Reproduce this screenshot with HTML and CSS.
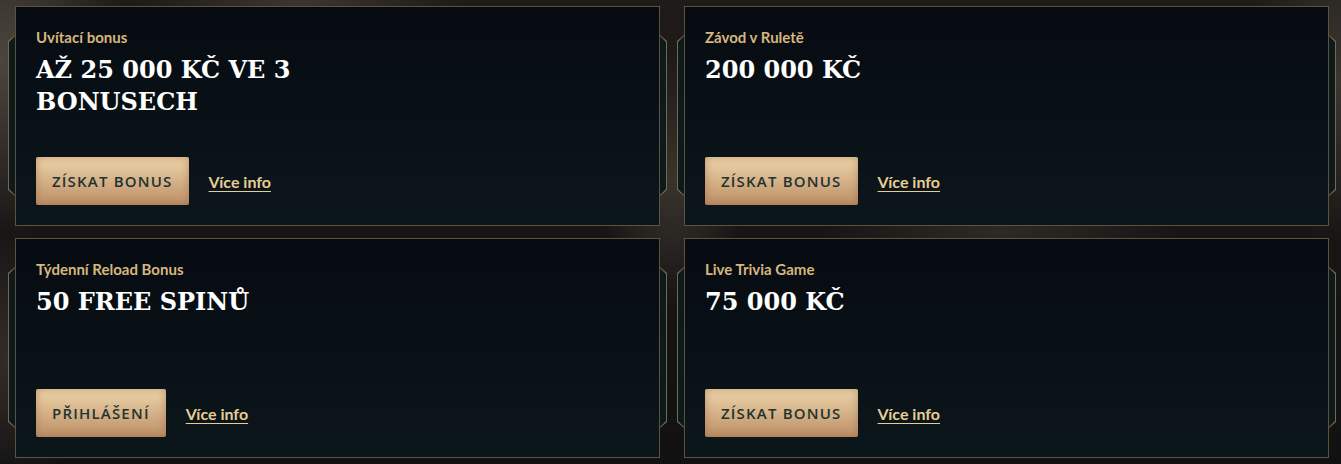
FILE: index.html
```html
<!DOCTYPE html>
<html lang="cs">

<head>
    <meta charset="UTF-8">
    <meta name="viewport" content="width=device-width, initial-scale=1.0">
    <title>Bonusy</title>
    <link rel="stylesheet" href="styles.css">
</head>

<body>
    <div class="promo-grid">
        <!-- Uvitaci bonus -->
        <div class="promo-card">
            <span class="tab tab-left"></span>
            <span class="tab tab-right"></span>
            <div class="promo-label">Uvítací bonus</div>
            <div class="promo-title">AŽ 25 000 KČ VE 3<br>BONUSECH</div>
            <div class="promo-actions">
                <a class="btn-gold" href="#">ZÍSKAT BONUS</a>
                <a class="more-link" href="#">Více info</a>
            </div>
        </div>

        <!-- Zavod v Rulete -->
        <div class="promo-card">
            <span class="tab tab-left"></span>
            <span class="tab tab-right"></span>
            <div class="promo-label">Závod v Ruletě</div>
            <div class="promo-title">200 000 KČ</div>
            <div class="promo-actions">
                <a class="btn-gold" href="#">ZÍSKAT BONUS</a>
                <a class="more-link" href="#">Více info</a>
            </div>
        </div>

        <!-- Reload bonus -->
        <div class="promo-card">
            <span class="tab tab-left"></span>
            <span class="tab tab-right"></span>
            <div class="promo-label">Týdenní Reload Bonus</div>
            <div class="promo-title">50 FREE SPINŮ</div>
            <div class="promo-actions">
                <a class="btn-gold" href="#">PŘIHLÁŠENÍ</a>
                <a class="more-link" href="#">Více info</a>
            </div>
        </div>

        <!-- Trivia -->
        <div class="promo-card">
            <span class="tab tab-left"></span>
            <span class="tab tab-right"></span>
            <div class="promo-label">Live Trivia Game</div>
            <div class="promo-title">75 000 KČ</div>
            <div class="promo-actions">
                <a class="btn-gold" href="#">ZÍSKAT BONUS</a>
                <a class="more-link" href="#">Více info</a>
            </div>
        </div>
    </div>
</body>

</html>
```

FILE: styles.css
```css
/* General Styles */
body {
    margin: 0;
    padding: 0;
    height: 464px;
    overflow: hidden;
    font-family: Lato, "Noto Sans", sans-serif;
    background-color: #161413;
    background-image:
        radial-gradient(ellipse 160px 220px at 0px 60px, rgba(90, 84, 76, 0.75), transparent 80%),
        radial-gradient(ellipse 120px 160px at 10px 360px, rgba(70, 62, 55, 0.6), transparent 80%),
        radial-gradient(ellipse 90px 160px at 672px 180px, rgba(70, 64, 58, 0.7), transparent 80%),
        radial-gradient(ellipse 200px 80px at 300px 0px, rgba(80, 72, 62, 0.6), transparent 80%),
        radial-gradient(ellipse 220px 60px at 1000px 232px, rgba(60, 54, 48, 0.6), transparent 80%),
        radial-gradient(ellipse 120px 200px at 1341px 80px, rgba(80, 74, 66, 0.6), transparent 80%),
        linear-gradient(#1e1b18, #111112);
}

.promo-grid {
    display: grid;
    grid-template-columns: 645px 645px;
    grid-auto-rows: 220px;
    column-gap: 24px;
    row-gap: 12px;
    padding: 6px 12px 0 15px;
}

/* Card */
.promo-card {
    position: relative;
    box-sizing: border-box;
    display: flex;
    flex-direction: column;
    padding: 21px 20px 20px 20px;
    border: 1px solid #5d523b;
    background: linear-gradient(#060b11, #0b161b);
}

/* Side tabs */
.tab {
    position: absolute;
    top: 28px;
    bottom: 29px;
    width: 7px;
    background-color: #7a6845;
}

.tab::before {
    content: '';
    position: absolute;
    top: 1px;
    bottom: 1px;
    width: 6px;
    background-color: #0c1a1d;
}

.tab-left {
    left: -8px;
    clip-path: polygon(100% 0, 0 6px, 0 calc(100% - 6px), 100% 100%);
}

.tab-left::before {
    left: 1px;
    clip-path: polygon(100% 0, 0 6px, 0 calc(100% - 6px), 100% 100%);
}

.tab-right {
    right: -8px;
    clip-path: polygon(0 0, 100% 6px, 100% calc(100% - 6px), 0 100%);
}

.tab-right::before {
    right: 1px;
    clip-path: polygon(0 0, 100% 6px, 100% calc(100% - 6px), 0 100%);
}

.promo-label {
    color: #d7b67f;
    font-size: 15px;
    font-weight: 700;
    line-height: 18px;
}

.promo-title {
    margin-top: 8px;
    color: #ffffff;
    font-family: "DejaVu Serif", serif;
    font-size: 24px;
    font-weight: bold;
    line-height: 32px;
}

.promo-actions {
    margin-top: auto;
    display: flex;
    align-items: center;
    gap: 20px;
}

.btn-gold {
    display: inline-flex;
    align-items: center;
    height: 48px;
    padding: 0 16px;
    box-sizing: border-box;
    border-radius: 2px;
    background: linear-gradient(#eed5ab, #d3ae85 55%, #bd8f66);
    box-shadow: inset 0 0 8px rgba(150, 100, 60, 0.55);
    color: #1d3431;
    font-family: "Open Sans", sans-serif;
    font-size: 15px;
    font-weight: 600;
    letter-spacing: 1.2px;
    text-decoration: none;
}

.more-link {
    color: #e8cc95;
    font-size: 16px;
    font-weight: 700;
    text-decoration: underline;
    text-underline-offset: 3px;
}
```
